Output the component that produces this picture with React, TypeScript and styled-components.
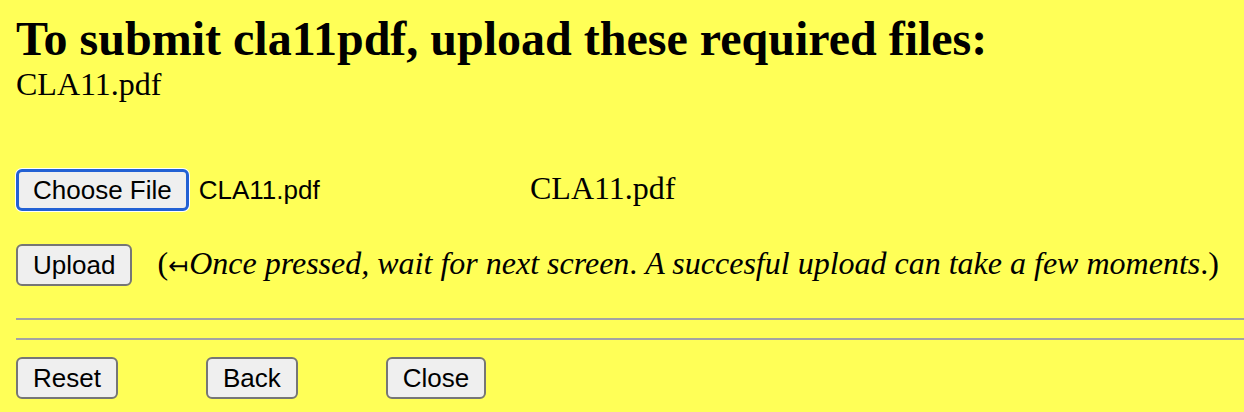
import styled, { createGlobalStyle } from "styled-components";

const GlobalStyle = createGlobalStyle`
  html, body {
    margin: 0;
    padding: 0;
    background: #ffff57;
  }
  body {
    font-family: "Liberation Serif", "Times New Roman", serif;
    color: #000;
  }
`;

const Page = styled.div`
  padding: 12px 0 12px 16px;
  min-height: 412px;
  box-sizing: border-box;
  background: #ffff57;
`;

const Title = styled.h2`
  margin: 0;
  font-size: 48px;
  line-height: 54px;
  font-weight: bold;
`;

const FileName = styled.div`
  font-size: 32px;
  line-height: 36px;
`;

const Row = styled.div<{ gap?: number; top: number }>`
  display: flex;
  align-items: baseline;
  gap: ${(p) => p.gap ?? 0}px;
  margin-top: ${(p) => p.top}px;
`;

const Button = styled.button<{ focused?: boolean }>`
  font-family: "Liberation Sans", Arial, sans-serif;
  font-size: 26px;
  line-height: 30px;
  height: 42px;
  box-sizing: border-box;
  padding: 0 ${(p) => (p.focused ? 14 : 15)}px;
  background: #efefef;
  color: #000;
  border: ${(p) => (p.focused ? "3px solid #2361d4" : "2px solid #767676")};
  border-radius: 6px;
  box-shadow: ${(p) => (p.focused ? "0 0 0 1px #fff" : "none")};
`;

const FilePicker = styled.div`
  display: flex;
  align-items: baseline;
  gap: 10px;
  width: 514px;
`;

const ChosenName = styled.span`
  font-family: "Liberation Sans", Arial, sans-serif;
  font-size: 26px;
`;

const ServerName = styled.span`
  font-size: 32px;
`;

const Note = styled.span`
  font-size: 32px;
  margin-left: 25px;
  em {
    font-style: italic;
  }
`;

const Arrow = styled.span`
  font-family: "DejaVu Sans", sans-serif;
  font-size: 24px;
  margin-right: 1px;
`;

const Rule = styled.hr<{ top: number }>`
  margin: ${(p) => p.top}px 0 0 0;
  border: none;
  height: 2px;
  background: #a3a3a3;
`;

export default function App() {
  return (
    <Page>
      <GlobalStyle />
      <Title>To submit cla11pdf, upload these required files:</Title>
      <FileName>CLA11.pdf</FileName>

      <Row top={67}>
        <FilePicker>
          <Button focused>Choose File</Button>
          <ChosenName>CLA11.pdf</ChosenName>
        </FilePicker>
        <ServerName>CLA11.pdf</ServerName>
      </Row>

      <Row top={33}>
        <Button>Upload</Button>
        <Note>
          (<Arrow>↤</Arrow>
          <em>Once pressed, wait for next screen</em>. <em>A succesful upload can take a few moments</em>.)
        </Note>
      </Row>

      <Rule top={32} />
      <Rule top={18} />

      <Row top={17} gap={88}>
        <Button>Reset</Button>
        <Button>Back</Button>
        <Button>Close</Button>
      </Row>
    </Page>
  );
}
